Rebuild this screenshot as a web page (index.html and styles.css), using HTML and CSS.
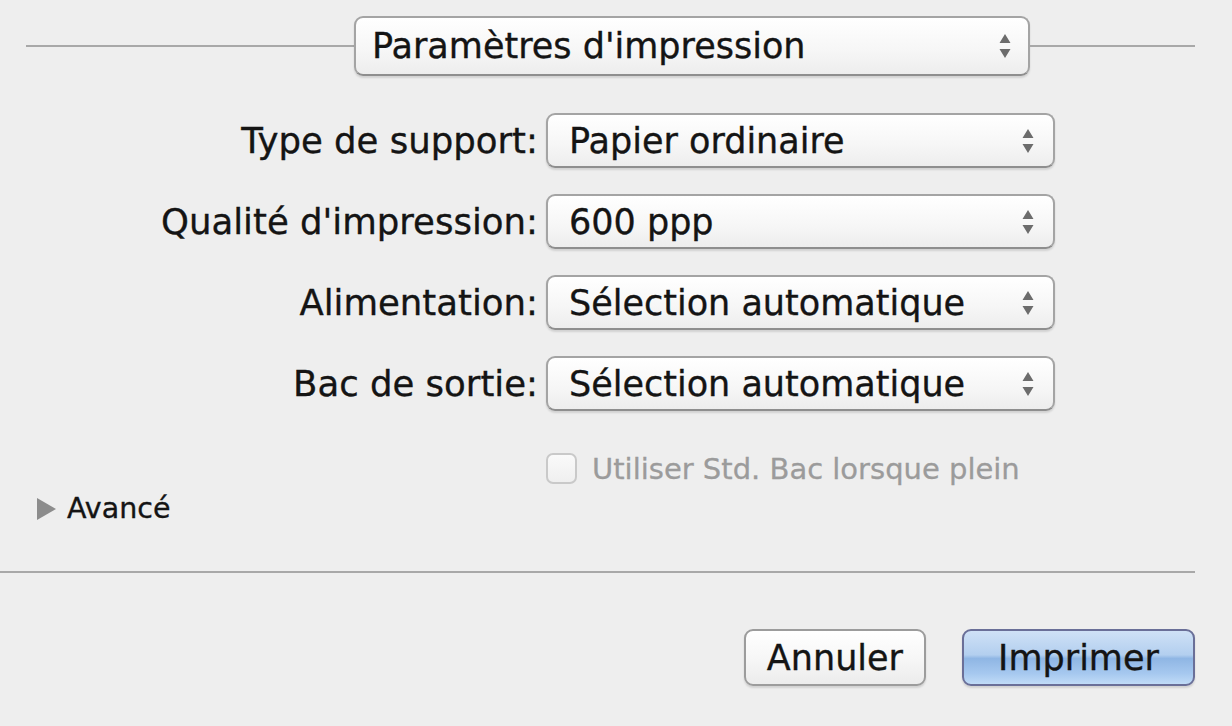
FILE: index.html
```html
<!DOCTYPE html>
<html lang="fr">
<head>
    <meta charset="UTF-8">
    <title>Imprimer</title>
    <link rel="stylesheet" href="styles.css">
</head>
<body>
    <div class="sheet">
        <div class="header">
            <div class="rule"></div>
            <div class="popup popup-wide">
                <span>Paramètres d'impression</span>
                <svg class="arrows" width="14" height="28" viewBox="0 0 14 28"><path d="M7 2 L12.5 11 L1.5 11 Z M7 26 L12.5 17 L1.5 17 Z" fill="#6c6c6c"/></svg>
            </div>
            <div class="rule"></div>
        </div>

        <div class="form">
            <label class="form-label">Type de support:</label>
            <div class="popup">
                <span>Papier ordinaire</span>
                <svg class="arrows" width="14" height="28" viewBox="0 0 14 28"><path d="M7 2 L12.5 11 L1.5 11 Z M7 26 L12.5 17 L1.5 17 Z" fill="#6c6c6c"/></svg>
            </div>

            <label class="form-label">Qualité d'impression:</label>
            <div class="popup">
                <span>600 ppp</span>
                <svg class="arrows" width="14" height="28" viewBox="0 0 14 28"><path d="M7 2 L12.5 11 L1.5 11 Z M7 26 L12.5 17 L1.5 17 Z" fill="#6c6c6c"/></svg>
            </div>

            <label class="form-label">Alimentation:</label>
            <div class="popup">
                <span>Sélection automatique</span>
                <svg class="arrows" width="14" height="28" viewBox="0 0 14 28"><path d="M7 2 L12.5 11 L1.5 11 Z M7 26 L12.5 17 L1.5 17 Z" fill="#6c6c6c"/></svg>
            </div>

            <label class="form-label">Bac de sortie:</label>
            <div class="popup">
                <span>Sélection automatique</span>
                <svg class="arrows" width="14" height="28" viewBox="0 0 14 28"><path d="M7 2 L12.5 11 L1.5 11 Z M7 26 L12.5 17 L1.5 17 Z" fill="#6c6c6c"/></svg>
            </div>

            <div></div>
            <div class="check-row">
                <span class="checkbox"></span>
                <span class="check-text">Utiliser Std. Bac lorsque plein</span>
            </div>
        </div>

        <div class="disclosure">
            <span class="triangle"></span>
            <span>Avancé</span>
        </div>

        <div class="separator"></div>

        <div class="buttons">
            <button class="btn">Annuler</button>
            <button class="btn btn-default">Imprimer</button>
        </div>
    </div>
</body>
</html>
```

FILE: styles.css
```css
body {
    margin: 0;
    background-color: #eeeeee;
    font-family: "DejaVu Sans", "Liberation Sans", sans-serif;
    color: #141414;
}
.sheet {
    width: 1232px;
    height: 726px;
    padding-top: 16px;
    box-sizing: border-box;
    -webkit-text-stroke: 0.35px #141414;
}
.header {
    display: grid;
    grid-template-columns: 328px 676px 1fr;
    align-items: center;
    padding: 0 37px 0 26px;
    height: 60px;
}
.rule {
    height: 2px;
    background-color: #a8a8a8;
}
.popup {
    display: flex;
    align-items: center;
    justify-content: space-between;
    height: 55px;
    padding: 0 18px 0 21px;
    box-sizing: border-box;
    border: 2px solid #a4a4a4;
    border-bottom-color: #8e8e8e;
    border-radius: 9px;
    background: linear-gradient(#ffffff, #f6f6f6 60%, #ededed);
    box-shadow: 0 2px 2px rgba(0,0,0,0.12);
    font-size: 35px;
}
.popup-wide {
    height: 60px;
    padding-left: 16px;
    padding-right: 16px;
}
.arrows {
    flex-shrink: 0;
}
.form {
    display: grid;
    grid-template-columns: 538px 509px;
    grid-auto-rows: 55px;
    column-gap: 8px;
    row-gap: 26px;
    margin-top: 37px;
}
.form-label {
    align-self: center;
    text-align: right;
    font-size: 35.5px;
}
.check-row {
    display: flex;
    align-items: center;
    gap: 15px;
    margin-top: 8px;
}
.checkbox {
    width: 31px;
    height: 31px;
    border: 2px solid #c9c9c9;
    border-radius: 7px;
    background: linear-gradient(#fafafa, #efefef);
    box-sizing: border-box;
    flex-shrink: 0;
}
.check-text {
    font-size: 29px;
    color: #9b9b9b;
    -webkit-text-stroke: 0.3px #9b9b9b;
}
.disclosure {
    display: flex;
    align-items: center;
    gap: 11px;
    padding-left: 37px;
    font-size: 28.5px;
}
.triangle {
    width: 0;
    height: 0;
    border-top: 11px solid transparent;
    border-bottom: 11px solid transparent;
    border-left: 19px solid #8c8c8c;
}
.separator {
    width: 1195px;
    height: 2px;
    background-color: #a8a8a8;
    margin-top: 46px;
}
.buttons {
    display: flex;
    justify-content: flex-end;
    gap: 36px;
    padding-right: 37px;
    margin-top: 56px;
}
.btn {
    height: 57px;
    padding: 0 21px;
    font-family: "DejaVu Sans", "Liberation Sans", sans-serif;
    font-size: 35px;
    color: #141414;
    -webkit-text-stroke: 0.35px #141414;
    border: 2px solid #9c9c9c;
    border-radius: 9px;
    background: linear-gradient(#ffffff, #f7f7f7 50%, #ececec);
    box-shadow: 0 2px 2px rgba(0,0,0,0.12);
}
.btn-default {
    width: 233px;
    border-color: #6a6f98;
    background: linear-gradient(#cfe1f6, #b3cfef 45%, #8fb6e4 52%, #a6c8ef 80%, #c0dbf7);
}
```
